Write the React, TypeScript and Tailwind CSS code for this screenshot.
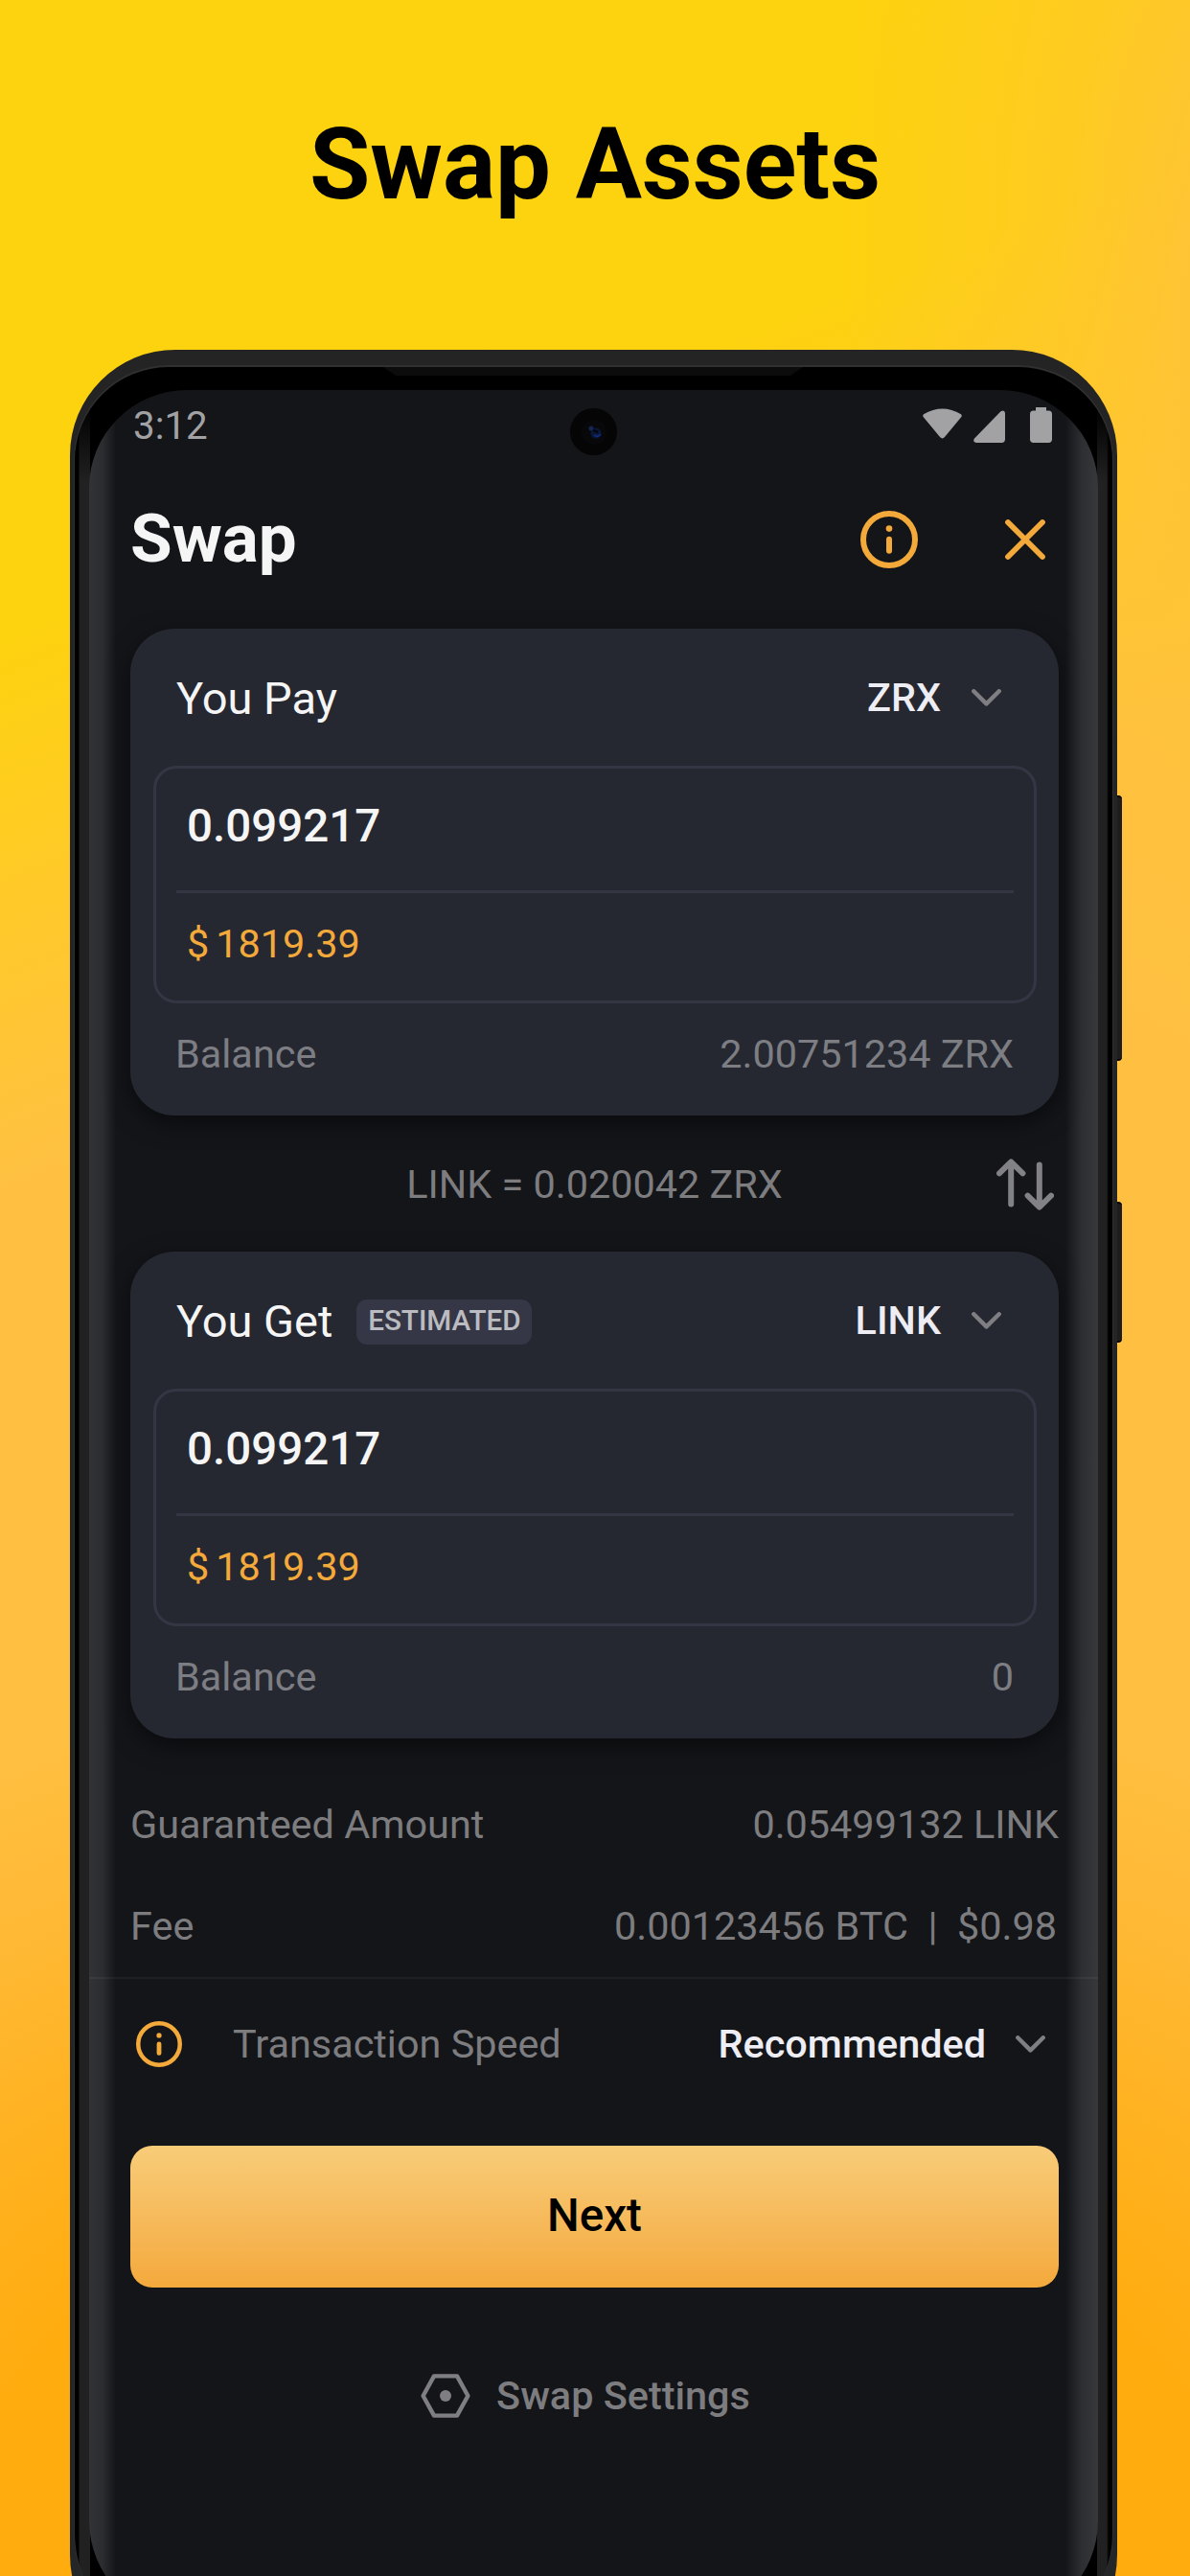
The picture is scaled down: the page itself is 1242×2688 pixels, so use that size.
import type { ReactNode } from "react";

function InfoIcon({ className, stroke }: { className: string; stroke: number }) {
  return (
    <svg viewBox="0 0 60 60" fill="none" className={className}>
      <circle cx="30" cy="30" r={30 - stroke / 2} stroke="#f4a93b" strokeWidth={stroke} />
      <circle cx="30" cy="18.6" r="3.3" fill="#f4a93b" />
      <path d="M30 29.8v12" stroke="#f4a93b" strokeWidth="6" strokeLinecap="round" />
    </svg>
  );
}

function CloseIcon() {
  return (
    <svg viewBox="0 0 48 48" fill="none" className="h-12 w-12">
      <path d="M6 6l36 36M42 6L6 42" stroke="#f4a93b" strokeWidth="5.8" strokeLinecap="round" />
    </svg>
  );
}

function Chevron() {
  return (
    <svg viewBox="0 0 31 18" fill="none" className="h-[18px] w-[31px]">
      <path d="M2.3 2.3l13.2 13.1L28.7 2.3" stroke="#7f7f83" strokeWidth="4.4" strokeLinecap="round" strokeLinejoin="round" />
    </svg>
  );
}

function SwapArrows() {
  return (
    <svg viewBox="0 0 60 54" fill="none" className="h-[54px] w-[60px]">
      <g stroke="#828286" strokeWidth="6" strokeLinecap="round" strokeLinejoin="round">
        <path d="M15.2 47.5V4M3 15.4L15.2 3.4l12.2 12" />
        <path d="M44.8 6.5V50M32.6 38.6l12.2 12 12.2-12" />
      </g>
    </svg>
  );
}

function StatusIcons() {
  return (
    <div className="flex items-start">
      <svg viewBox="0 0 41 32" className="mt-[1px] h-[32px] w-[41px]">
        <path d="M1 6.2Q20.500-5.200 40 6.200Q41.300 7.500 40.400 8.900L23 30Q20.500 32.800 18 30L.600 8.900Q-.300 7.500 1 6.200Z" fill="#a2a2a4" />
      </svg>
      <svg viewBox="0 0 33 34" className="mt-[3px] ml-[12px] h-[34px] w-[33px]">
        <path d="M1 29.500L28.500 1.200Q32.500-1 33 3V30.500Q32.800 33.800 29.500 34H3Q-1.300 33.500 1 29.500Z" fill="#a2a2a4" />
      </svg>
      <svg viewBox="0 0 23 37" className="ml-[26px] h-[37px] w-[23px]">
        <path d="M6 0H17V3.500H19.500Q23 3.700 23 7V33.500Q22.800 36.800 19.500 37H3.500Q.2 36.800 0 33.500V7Q0 3.700 3.500 3.500H6Z" fill="#a2a2a4" />
      </svg>
    </div>
  );
}

function SettingsIcon() {
  return (
    <svg viewBox="0 0 52 46" fill="none" className="h-[46px] w-[52px]">
      <path d="M14 2.400H38L49.400 23L38 43.600H14L2.600 23Z" stroke="#7f7f83" strokeWidth="4.400" strokeLinejoin="round" />
      <circle cx="26" cy="23" r="6" fill="#7f7f83" />
    </svg>
  );
}

function AssetCard({ title, badge, asset, balance }: { title: string; badge?: ReactNode; asset: string; balance: string }) {
  return (
    <section className="h-[508px] rounded-[46px] bg-[#262831] shadow-[0_8px_24px_rgba(0,0,0,0.5)]">
      <div className="flex h-[143px] items-center justify-between pt-[3px] pr-[60px] pl-[48px]">
        <div className="flex items-center gap-[25px]">
          <h2 className="text-[47px] leading-[56px] text-[#f5f5f6]">{title}</h2>
          {badge}
        </div>
        <div className="flex items-center gap-[32px] pb-[2px]">
          <span className="text-[41.300px] leading-[50px] font-medium text-[#ededf3]">{asset}</span>
          <Chevron />
        </div>
      </div>
      <div className="mr-[23px] ml-[24px] h-[248px] rounded-[24px] border-[3px] border-[#343644]">
        <div className="flex h-[127px] items-center pb-[8px] pl-[32px] text-[47.500px] leading-[56px] font-medium text-[#f5f5f6]">0.099217</div>
        <div className="mx-[21px] h-[3px] bg-[#343644]" />
        <div className="flex h-[112px] items-center gap-[7px] pb-[7px] pl-[32px] text-[41.400px] leading-[50px] text-[#f4a93b]">
          <span>$</span>
          <span>1819.39</span>
        </div>
      </div>
      <div className="flex h-[117px] items-center justify-between px-[47px] pb-[11px] text-[41.400px] leading-[50px] text-[#7d7e83]">
        <span>Balance</span>
        <span>{balance}</span>
      </div>
    </section>
  );
}

function Screen() {
  return (
    <div className="relative h-[2328px] overflow-hidden rounded-t-[102px] rounded-b-[105px] bg-[#141519] pr-[41px] pl-[43px]">
      <div className="flex h-[76px] justify-between pr-[7px] pl-[3px]">
        <span className="text-[40.300px] leading-[76px] text-[#a2a2a4]">3:12</span>
        <div className="pt-[18px]">
          <StatusIcons />
        </div>
      </div>

      <div className="flex h-[159px] items-center justify-between pr-[11px]">
        <h1 className="pb-[2px] text-[71px] leading-[80px] font-bold text-[#f5f5f6]">Swap</h1>
        <div className="flex items-center gap-[88px]">
          <InfoIcon className="h-[60px] w-[60px]" stroke={6} />
          <CloseIcon />
        </div>
      </div>

      <div className="pt-[14px]">
        <AssetCard title="You Pay" asset="ZRX" balance="2.00751234 ZRX" />
      </div>

      <div className="grid h-[142px] grid-cols-[1fr_auto_1fr] items-center pt-[2px]">
        <span />
        <span className="text-[41.400px] leading-[50px] text-[#7d7d80]">LINK = 0.020042 ZRX</span>
        <div className="flex justify-end pr-[5px]">
          <SwapArrows />
        </div>
      </div>

      <AssetCard
        title="You Get"
        badge={
          <span className="flex h-[47px] w-[183px] items-center justify-center rounded-[11px] bg-[#353746] pb-[3px] text-[29.700px] leading-[36px] font-medium text-[#bbbcc1]">
            ESTIMATED
          </span>
        }
        asset="LINK"
        balance="0"
      />

      <div className="pt-[37px] text-[41.400px] leading-[106px] text-[#7d7d80]">
        <div className="flex h-[106px] justify-between">
          <span>Guaranteed Amount</span>
          <span>0.05499132 LINK</span>
        </div>
        <div className="flex h-[106px] justify-between pr-[2px]">
          <span>Fee</span>
          <span className="whitespace-pre">0.00123456 BTC  |  $0.98</span>
        </div>
      </div>

      <div className="-mr-[41px] -ml-[43px] h-[2px] bg-[#1f2026]" />

      <div className="flex h-[136px] items-center justify-between pr-[14px] pl-[6px]">
        <div className="flex items-center gap-[53px]">
          <InfoIcon className="h-12 w-12" stroke={5.6} />
          <span className="text-[41.400px] leading-[50px] text-[#7d7d80]">Transaction Speed</span>
        </div>
        <div className="flex items-center gap-[31px]">
          <span className="text-[41.400px] leading-[50px] font-medium text-[#ededf3]">Recommended</span>
          <Chevron />
        </div>
      </div>

      <div className="pt-[38px]">
        <button className="flex h-[148px] w-full items-center justify-center rounded-[23px] bg-linear-to-b from-[#f8cc78] to-[#f4a93b] pb-[2px] text-[47.500px] leading-[56px] font-medium text-black">
          Next
        </button>
      </div>

      <div className="flex h-[225px] items-center justify-center gap-[27px] pr-[19px]">
        <SettingsIcon />
        <span className="text-[41.400px] leading-[50px] font-medium text-[#7d7d80]">Swap Settings</span>
      </div>

      <div className="absolute top-[19px] left-[502px] flex h-[49px] w-[49px] items-center justify-center rounded-full bg-[#050506]">
        <svg viewBox="0 0 28 28" className="h-7 w-7">
          <circle cx="14" cy="14" r="13" fill="#08080a" />
          <circle cx="16" cy="15" r="5.500" fill="#0a1638" />
          <circle cx="11" cy="10" r="2.500" fill="#12264f" />
          <path d="M14 17q4 3 7-1" stroke="#102a78" strokeWidth="2" fill="none" />
          <path d="M13 12l5 2" stroke="#030408" strokeWidth="2" />
        </svg>
      </div>

      <div className="absolute inset-y-0 left-0 w-[28px] bg-linear-to-r from-white/13 via-white/10 to-transparent" />
      <div className="absolute inset-y-0 right-0 w-[34px] bg-linear-to-l from-white/15 via-white/11 to-transparent" />
    </div>
  );
}

function Phone() {
  return (
    <div className="relative ml-[73px] h-[2425px] w-[1093px]">
      <div className="absolute top-[465px] -right-[5px] h-[277px] w-[8px] rounded-r-[4px] border-y-2 border-black bg-[#1d1d1d]" />
      <div className="absolute top-[889px] -right-[5px] h-[147px] w-[8px] rounded-r-[4px] border-y-2 border-black bg-[#1d1d1d]" />
      <div className="relative h-full rounded-t-[110px] rounded-b-[125px] bg-linear-to-b from-[#242424] to-[#242627] px-[5px] pt-[18px]">
        <div className="relative h-[2378px] rounded-t-[98px] rounded-b-[118px] bg-[linear-gradient(to_bottom,#000_40px,transparent_120px),linear-gradient(to_right,#000_0,#000_4px,#212121_5px,#212121_16px,#000_16px,#000_1067px,#212121_1067px,#212121_1077px,#000_1079px,#000_1083px)] px-[15px] pt-[24px] shadow-[0_-1px_0_1px_#303030]">
          <div className="absolute top-0 left-[322px] h-[9px] w-[438px] bg-[#0c0c0c] [clip-path:polygon(0_0,100%_0,97%_100%,3%_100%)]" />
          <Screen />
        </div>
      </div>
    </div>
  );
}

export default function App() {
  return (
    <main className="h-[2688px] w-full overflow-hidden bg-[radial-gradient(ellipse_1400px_1050px_at_621px_2750px,#ffaa0a_0%,#ffac0f_50%,#ffb11e_63%,#ffb833_80%,transparent_100%),radial-gradient(ellipse_460px_900px_at_1340px_260px,#ffc03e_0%,#ffc43380_50%,transparent_100%),linear-gradient(157.7deg,#fdd20f_21%,#ffc92a_30%,#ffc042_39%)] font-[Roboto,sans-serif]">
      <h1 className="h-[365px] pt-[112px] text-center text-[103px] leading-[120px] font-bold text-black">Swap Assets</h1>
      <Phone />
    </main>
  );
}
